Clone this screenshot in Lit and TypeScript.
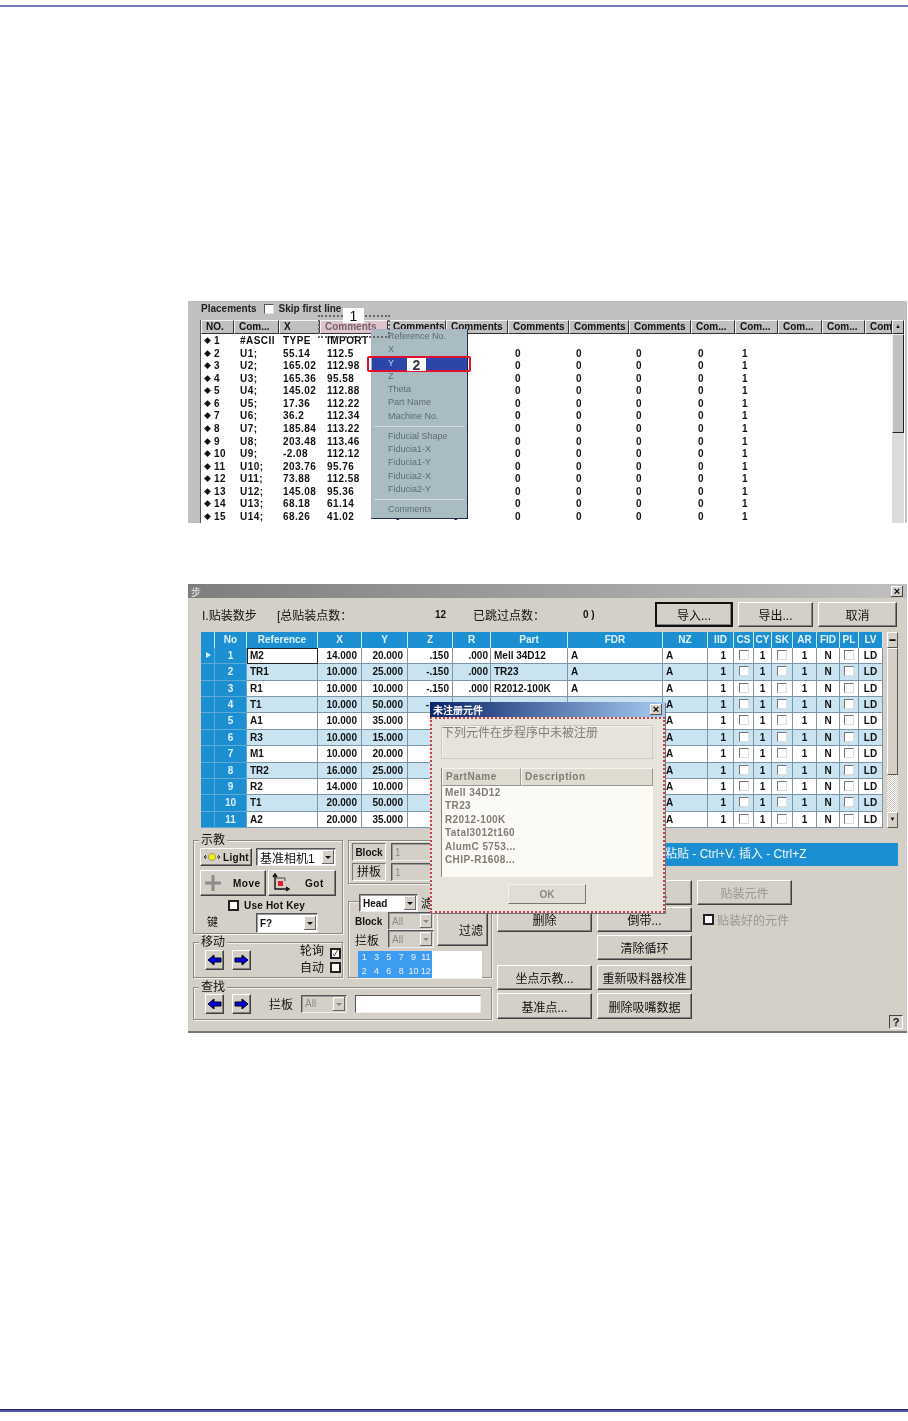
import { LitElement, html, css, svg } from "lit";
import { customElement } from "lit/decorators.js";

const FONT = css`
  :host {
    font-family: "Liberation Sans", "Noto Sans CJK SC", sans-serif;
  }
`;

const COM_COLS = [33, 45, 41, 68, 58, 62, 61, 60, 62, 44, 43, 44, 43, 27];
const COM_HEAD = ["NO.", "Com...", "X", "Comments", "Comments", "Comments", "Comments", "Comments", "Comments", "Com...", "Com...", "Com...", "Com...", "Com"];

const PLACEMENTS = [
  ["#ASCII", "TYPE", "IMPORT"],
  ["U1;", "55.14", "112.5"],
  ["U2;", "165.02", "112.98"],
  ["U3;", "165.36", "95.58"],
  ["U4;", "145.02", "112.88"],
  ["U5;", "17.36", "112.22"],
  ["U6;", "36.2", "112.34"],
  ["U7;", "185.84", "113.22"],
  ["U8;", "203.48", "113.46"],
  ["U9;", "-2.08", "112.12"],
  ["U10;", "203.76", "95.76"],
  ["U11;", "73.88", "112.58"],
  ["U12;", "145.08", "95.36"],
  ["U13;", "68.18", "61.14"],
  ["U14;", "68.26", "41.02"],
];

const MENU = [
  "Reference No.", "X", "Y", "Z", "Theta", "Part Name", "Machine No.", "-",
  "Fiducial Shape", "Fiducia1-X", "Fiducia1-Y", "Fiducia2-X", "Fiducia2-Y", "-", "Comments",
];

@customElement("placements-panel")
class PlacementsPanel extends LitElement {
  render() {
    const tpl = COM_COLS.map((w) => w + "px").join(" ");
    const last = PLACEMENTS.length - 1;
    return html`
      <div class="top">
        <span class="lbl">Placements</span>
        <span class="check"></span>
        <span class="lbl">Skip first line</span>
      </div>
      <div class="table-wrap">
        <div class="table">
          <div class="head" style="grid-template-columns:${tpl}">
            ${COM_HEAD.map((h, i) => html`<div class=${i === 3 ? "hc pink" : "hc"}>${h}</div>`)}
          </div>
          ${PLACEMENTS.map(
            (r, i) => html`
              <div class="row" style="grid-template-columns:${tpl}">
                <div class="no"><span class="dia">◆</span>${i + 1}</div>
                <div class="ref">${r[0]}</div>
                <div class="xc">${r[1]}</div>
                <div class="yc">${r[2]}</div>
                <!-- the first two columns sit under the menu, only the last row peeks out -->
                <div class="z">${i === last ? "0" : ""}</div>
                <div class="z">${i === last ? "0" : ""}</div>
                ${[0, 1, 2, 3].map((c) => html`<div class="z">${i === 0 ? "" : "0"}</div>`)}
                <div class="z">${i === 0 ? "" : "1"}</div>
              </div>
            `
          )}
        </div>
        <div class="scroll">
          <div class="sbtn">▲</div>
          <div class="thumb"></div>
        </div>
      </div>

      <div class="menu">
        ${MENU.map((m) =>
          m === "-"
            ? html`<div class="sep"></div>`
            : html`<div class=${m === "Y" ? "item sel" : "item"}>${m}</div>`
        )}
      </div>
      <div class="dotted"></div>
      <div class="mark m1">1</div>
      <div class="redbox"></div>
      <div class="mark m2">2</div>
    `;
  }

  static styles = [
    FONT,
    css`
      :host {
        display: block;
        position: relative;
        width: 719px;
        height: 222px;
        background: #c0c0c0;
        overflow: hidden;
        color: #111;
        font-size: 10px;
        filter: blur(0.35px);
      }
      .top {
        height: 19px;
        padding: 0 0 4px 13px;
        box-sizing: border-box;
        display: flex;
        align-items: center;
        gap: 5px;
      }
      .lbl {
        font-weight: bold;
        color: #222;
      }
      .check {
        width: 8px;
        height: 8px;
        margin-left: 2px;
        background: #fff;
        border: 1px solid #555;
        border-right-color: #ddd;
        border-bottom-color: #ddd;
      }
      .table-wrap {
        display: flex;
        margin-left: 12px;
        width: 704px;
        height: 203px;
        background: #fff;
        border-left: 1px solid #555;
      }
      .table {
        width: 691px;
        flex: none;
      }
      .head {
        display: grid;
        height: 14px;
      }
      .hc {
        background: #c0c0c0;
        border: 1px solid;
        border-color: #f4f4f4 #333 #333 #f4f4f4;
        padding-left: 4px;
        font-weight: bold;
        line-height: 12px;
        overflow: hidden;
        white-space: nowrap;
        box-sizing: border-box;
      }
      .pink {
        background: #dcc6cc;
        color: #7c6068;
      }
      .row {
        display: grid;
        height: 12.57px;
        line-height: 13px;
        font-weight: bold;
        letter-spacing: 0.45px;
        white-space: nowrap;
      }
      .no {
        padding-left: 3px;
      }
      .ref {
        padding-left: 6px;
      }
      .xc {
        padding-left: 4px;
      }
      .yc {
        padding-left: 7px;
      }
      .z {
        padding-left: 7px;
      }
      .dia {
        display: inline-block;
        width: 10px;
        font-size: 7px;
        vertical-align: 1px;
      }
      .scroll {
        width: 12px;
        flex: none;
        background: #dcdcdc;
      }
      .sbtn,
      .thumb {
        background: #c0c0c0;
        border: 1px solid;
        border-color: #f4f4f4 #222 #222 #f4f4f4;
        box-sizing: border-box;
      }
      .sbtn {
        height: 14px;
        font-size: 6px;
        line-height: 10px;
        text-align: center;
      }
      .thumb {
        height: 99px;
      }
      .menu {
        position: absolute;
        left: 183px;
        top: 28px;
        width: 97px;
        height: 190px;
        box-sizing: border-box;
        background: #a9bcc1;
        border: 1px solid #b0a8d0;
        border-right: 1px solid #1e2c55;
        border-bottom: 1px solid #1e2c55;
        color: #5c6c72;
        font-size: 9px;
      }
      .item {
        height: 13.3px;
        line-height: 13.3px;
        padding-left: 16px;
      }
      .sel {
        background: #2a46a8;
        color: #c8d0e8;
      }
      .sep {
        height: 1px;
        margin: 2.5px 2px 3.2px;
        background: #d0dcde;
      }
      .dotted {
        position: absolute;
        left: 130px;
        top: 14px;
        width: 68px;
        height: 19px;
        border: 2px dotted #666;
      }
      .redbox {
        position: absolute;
        left: 179px;
        top: 55px;
        width: 100px;
        height: 12px;
        border: 2px solid #e01030;
        border-radius: 2px;
      }
      .mark {
        position: absolute;
        background: #fff;
        font-size: 14px;
        text-align: center;
        color: #111;
      }
      .m1 {
        left: 155px;
        top: 7px;
        width: 21px;
        height: 15px;
        line-height: 16px;
      }
      .m2 {
        left: 219px;
        top: 57px;
        width: 19px;
        height: 13px;
        line-height: 14px;
        font-weight: bold;
        color: #334;
      }
    `,
  ];
}

const STEP_COLS = [14, 32, 71, 44, 46, 45, 38, 77, 95, 45, 26, 20, 18, 21, 24, 23, 19, 24];
const STEP_HEAD = ["", "No", "Reference", "X", "Y", "Z", "R", "Part", "FDR", "NZ", "IID", "CS", "CY", "SK", "AR", "FID", "PL", "LV"];
const STEP_ROWS = [
  ["M2", "14.000", "20.000", ".150", ".000", "Mell 34D12"],
  ["TR1", "10.000", "25.000", "-.150", ".000", "TR23"],
  ["R1", "10.000", "10.000", "-.150", ".000", "R2012-100K"],
  ["T1", "10.000", "50.000"],
  ["A1", "10.000", "35.000"],
  ["R3", "10.000", "15.000"],
  ["M1", "10.000", "20.000"],
  ["TR2", "16.000", "25.000"],
  ["R2", "14.000", "10.000"],
  ["T1", "20.000", "50.000"],
  ["A2", "20.000", "35.000"],
];
const MISSING = ["Mell 34D12", "TR23", "R2012-100K", "Tatal3012t160", "AlumC 5753...", "CHIP-R1608..."];

const arrow = (dir: "l" | "r") => html`
  <button class="btn arrow">
    <svg width="15" height="12" viewBox="0 0 15 12">
      ${svg`<path transform=${dir === "r" ? "matrix(-1 0 0 1 15 0)" : ""} d="M1 6 7 1V4H14V8H7V11Z" fill="#0000e0" stroke="#000" stroke-width="1"/>`}
    </svg>
  </button>
`;

const combo = (text: string, cls = "") => html`
  <div class="combo ${cls}">
    <span class="val">${text}</span><span class="drop"></span>
  </div>
`;

@customElement("step-window")
class StepWindow extends LitElement {
  renderGrid() {
    const tpl = STEP_COLS.map((w) => w + "px").join(" ");
    return html`
      <div class="grid">
        <div class="grow ghead" style="grid-template-columns:${tpl}">
          ${STEP_HEAD.map((h) => html`<div class="gh">${h}</div>`)}
        </div>
        ${STEP_ROWS.map((r, i) => {
          // rows from the fourth on run under the message box
          const covered = i >= 3;
          return html`
            <div class="grow ${i % 2 ? "alt" : ""}" style="grid-template-columns:${tpl}">
              <div class="gc ind">${i === 0 ? html`<span class="play"></span>` : ""}</div>
              <div class="gc ind ctr">${i + 1}</div>
              <div class="gc left ${i === 0 ? "focus" : ""}">${r[0]}</div>
              <div class="gc right">${r[1]}</div>
              <div class="gc right">${r[2]}</div>
              ${covered
                ? html`<div class="gc right peek">${i === 3 ? "-" : ""}</div>`
                : html`<div class="gc right tight">${r[3]}</div>`}
              <div class="gc right tighter">${r[4] ?? ""}</div>
              <div class="gc left">${r[5] ?? ""}</div>
              <div class="gc left">${covered ? "" : "A"}</div>
              <div class="gc left">A</div>
              <div class="gc right r2">1</div>
              <div class="gc ctr"><span class="cb"></span></div>
              <div class="gc ctr">1</div>
              <div class="gc ctr"><span class="cb"></span></div>
              <div class="gc ctr">1</div>
              <div class="gc ctr">N</div>
              <div class="gc ctr"><span class="cb"></span></div>
              <div class="gc ctr">LD</div>
            </div>
          `;
        })}
      </div>
      <div class="vscroll">
        <div class="sb">▬</div>
        <div class="sthumb"></div>
        <div class="strack"></div>
        <div class="sb">▼</div>
      </div>
    `;
  }

  renderTeach() {
    return html`
      <div class="group teach">
        <span class="legend">示教</span>
        <div class="teach-row">
          <button class="btn light">
            <svg width="18" height="10" viewBox="0 0 18 10">
              <path d="M1 5h3M14 5h3M3 3 1 5l2 2M15 3l2 2-2 2" fill="none" stroke="#333" stroke-width="1"/>
              <circle cx="9" cy="5" r="3.6" fill="#f4ea10" stroke="#777" stroke-width="0.6"/>
            </svg>
            Light
          </button>
          ${combo("基准相机1", "cam")}
        </div>
        <div class="teach-row two">
          <button class="btn move">
            <svg width="20" height="20" viewBox="0 0 20 20">
              <path d="M8.5 2h3v6.500h6.500v3h-6.500v6.500h-3v-6.500H2v-3h6.500Z" fill="#8c8c8c"/>
            </svg>
            <span>Move</span>
          </button>
          <button class="btn move got">
            <svg width="20" height="20" viewBox="0 0 20 20">
              <path d="M4 2V16H18M2 4 4 1 6 4M15 14l3 2-3 2" fill="none" stroke="#111" stroke-width="1.4"/>
              <path d="M4 5H14V8" fill="none" stroke="#444" stroke-width="1"/>
              <rect x="7" y="8" width="5" height="5" fill="#e02030"/>
            </svg>
            <span>Got</span>
          </button>
        </div>
        <label class="hot"><span class="cb dark"></span>Use Hot Key</label>
        <div class="key">
          <span class="keylbl">键</span>
          ${combo("F?", "f")}
        </div>
      </div>
    `;
  }

  renderMoves() {
    return html`
      <div class="group moves">
        <span class="legend">移动</span>
        ${arrow("l")} ${arrow("r")}
        <div class="auto">
          <div><span class="cjk">轮询</span><span class="cb dark on">✓</span></div>
          <div><span class="cjk">自动</span><span class="cb dark"></span></div>
        </div>
      </div>
    `;
  }

  renderFilter() {
    return html`
      <div class="mid">
        <div class="group blockbox">
          <div class="br"><span class="tag">Block</span>${combo("1", "dis")}</div>
          <div class="br"><span class="tag cjk">拼板</span>${combo("1", "dis")}</div>
        </div>
        <div class="group filter">
          <div class="head-combo">${combo("Head", "bold")}<span class="cjk">滤</span></div>
          <div class="filter-top">
            <div class="labels">
              <div class="fr"><span>Block</span>${combo("All", "dis")}</div>
              <div class="fr"><span class="cjk">拦板</span>${combo("All", "dis")}</div>
            </div>
            <button class="btn filterbtn">过滤</button>
          </div>
          <div class="blocks">
            <div class="nums">
              ${[1, 3, 5, 7, 9, 11, 2, 4, 6, 8, 10, 12].map((n) => html`<span>${n}</span>`)}
            </div>
          </div>
        </div>
      </div>
    `;
  }

  renderRight() {
    return html`
      <div class="right-col">
        <div class="bar"><span class="bartext">粘贴 - Ctrl+V. 插入 - Ctrl+Z</span></div>
        <div class="actions">
          <button class="btn a"></button>
          <button class="btn a">移动到...</button>
          <button class="btn a off">贴装元件</button>

          <button class="btn a">删除</button>
          <button class="btn a">倒带...</button>
          <label class="mounted"><span class="cb dark"></span>贴装好的元件</label>

          <span></span>
          <button class="btn a">清除循环</button>
          <span></span>

          <button class="btn a">坐点示教...</button>
          <button class="btn a">重新吸料器校准</button>
          <span></span>

          <button class="btn a last">基准点...</button>
          <button class="btn a last">删除吸嘴数据</button>
          <span></span>
        </div>
      </div>
    `;
  }

  render() {
    return html`
      <div class="title"><span class="cjk">步</span><span class="x">×</span></div>
      <div class="summary">
        <span>I.贴装数步</span>
        <span>[总贴装点数：</span>
        <span class="num">12</span>
        <span>已跳过点数：</span>
        <span class="num">0 )</span>
        <button class="btn top default">导入...</button>
        <button class="btn top">导出...</button>
        <button class="btn top">取消</button>
      </div>
      <div class="grid-wrap">${this.renderGrid()}</div>
      <div class="lower">
        <div class="lower-left">
          <div class="lower-top">
            <div class="col-left">${this.renderTeach()} ${this.renderMoves()}</div>
            ${this.renderFilter()}
          </div>
          <div class="group find">
            <span class="legend">查找</span>
            ${arrow("l")} ${arrow("r")}
            <span class="cjk findlbl">拦板</span>
            ${combo("All", "dis small")}
            <div class="findinput"></div>
          </div>
        </div>
        ${this.renderRight()}
      </div>
      <button class="btn help">?</button>

      <div class="dialog">
        <div class="dtitle"><span>未注册元件</span><span class="dx">×</span></div>
        <div class="dbody">
          <div class="msg">下列元件在步程序中未被注册</div>
          <div class="lv">
            <div class="lvhead"><span class="lvh">PartName</span><span class="lvh wide">Description</span></div>
            <div class="lvbody">${MISSING.map((m) => html`<div>${m}</div>`)}</div>
          </div>
          <button class="btn ok">OK</button>
        </div>
      </div>
    `;
  }

  static styles = [
    FONT,
    css`
      :host {
        display: block;
        position: relative;
        width: 719px;
        height: 449px;
        background: #d4d0c8;
        color: #111;
        font-size: 10px;
        box-sizing: border-box;
        border-bottom: 2px solid #777;
        filter: blur(0.4px);
      }
      * {
        box-sizing: border-box;
      }
      .cjk {
        font-size: 12px;
      }
      .title {
        height: 14px;
        background: linear-gradient(90deg, #7e7e7e, #c0c0c0);
        color: #eee;
        padding: 0 3px;
        display: flex;
        justify-content: space-between;
        align-items: center;
      }
      .title .cjk {
        font-size: 10px;
      }
      .x {
        width: 12px;
        height: 11px;
        margin-right: 1px;
        background: #d4d0c8;
        color: #000;
        font-weight: bold;
        font-size: 11px;
        line-height: 10px;
        text-align: center;
        box-shadow: inset -1px -1px #444, inset 1px 1px #fff;
      }
      .btn {
        font: inherit;
        color: inherit;
        padding: 0;
        background: #d4d0c8;
        border: 1px solid;
        border-color: #fff #404040 #404040 #fff;
        box-shadow: inset -1px -1px #808080;
      }
      .summary {
        height: 34px;
        padding: 4px 0 0 14px;
        display: grid;
        grid-template-columns: 75px 158px 38px 110px 72px 78px 80px 84px;
        grid-template-rows: 25px;
        align-items: center;
        font-size: 12px;
      }
      .num {
        font-size: 10px;
        font-weight: bold;
      }
      .top {
        height: 25px;
        font-size: 12px;
      }
      .top:not(.default) {
        margin-left: 5px;
      }
      .default {
        border: 2px solid #111;
      }
      .grid-wrap {
        display: flex;
        gap: 4px;
        height: 196px;
        padding-left: 13px;
        overflow: hidden;
      }
      .grid {
        width: 682px;
        flex: none;
      }
      .grow {
        display: grid;
        height: 16.36px;
        background: #fff;
        font-weight: bold;
        line-height: 15px;
      }
      .grow.alt {
        background: #c9e3f1;
      }
      .ghead {
        height: 16px;
        background: #1b8fd2;
      }
      .gh {
        color: #dff0fa;
        text-align: center;
        border-right: 1px solid #cfe6f3;
        overflow: hidden;
        white-space: nowrap;
      }
      .gc {
        border-right: 1px solid #7e97a6;
        border-bottom: 1px solid #7e97a6;
        overflow: hidden;
        white-space: nowrap;
      }
      .ind {
        background: #1b8fd2;
        color: #dff0fa;
        border-color: #5fa9d4;
      }
      .left {
        padding-left: 3px;
      }
      .right {
        text-align: right;
        padding-right: 4px;
      }
      .tight {
        padding-right: 3px;
      }
      .tighter {
        padding-right: 2px;
      }
      .peek {
        padding-right: 23px;
      }
      .r2 {
        padding-right: 7px;
      }
      .ctr {
        text-align: center;
      }
      .focus {
        outline: 1.5px solid #222;
        outline-offset: -1px;
      }
      .play {
        display: block;
        margin: 4px 0 0 5px;
        border-left: 5px solid #dff0fa;
        border-top: 3.5px solid transparent;
        border-bottom: 3.5px solid transparent;
        width: 0;
      }
      .cb {
        display: inline-block;
        width: 10px;
        height: 10px;
        background: #fff;
        border: 1px solid;
        border-color: #777 #ddd #ddd #777;
        vertical-align: -1px;
      }
      .cb.dark {
        width: 11px;
        height: 11px;
        border: 2px solid #222;
        font-size: 8px;
        line-height: 7px;
        text-align: center;
      }
      .vscroll {
        width: 11px;
        flex: none;
        display: flex;
        flex-direction: column;
        background: #d4d0c8;
      }
      .sb {
        height: 16px;
        background: #d4d0c8;
        border: 1px solid;
        border-color: #fff #555 #555 #fff;
        font-size: 6px;
        text-align: center;
        line-height: 13px;
      }
      .sthumb {
        height: 127px;
        background: #d4d0c8;
        border: 1px solid;
        border-color: #fff #555 #555 #fff;
      }
      .strack {
        flex: 1;
        background: repeating-conic-gradient(#fff 0 25%, #c8c4bc 0 50%) 0 0 / 2px 2px;
      }
      .lower {
        display: flex;
        gap: 5px;
        height: 203px;
        padding: 12px 0 0 5px;
      }
      .lower-left {
        width: 299px;
        flex: none;
      }
      .lower-top {
        display: flex;
        gap: 5px;
      }
      .col-left {
        width: 150px;
        display: flex;
        flex-direction: column;
        gap: 8px;
      }
      .group {
        position: relative;
        border: 1px solid #8c8a84;
        box-shadow: 1px 1px #f4f2ec, inset 1px 1px #f4f2ec;
      }
      .legend {
        position: absolute;
        left: 5px;
        top: -8px;
        background: #d4d0c8;
        padding: 0 2px;
        font-size: 12px;
        line-height: 14px;
      }
      .combo {
        display: flex;
        align-items: center;
        background: #fff;
        border: 1px solid;
        border-color: #555 #eee #eee #555;
        box-shadow: inset 1px 1px #999;
        height: 18px;
        padding-left: 3px;
        font-weight: bold;
      }
      .combo .val {
        flex: 1;
        overflow: hidden;
        white-space: nowrap;
      }
      .drop {
        position: relative;
        width: 12px;
        height: 14px;
        margin-right: 1px;
        background: #d4d0c8;
        box-shadow: inset -1px -1px #666, inset 1px 1px #fff;
      }
      .drop::after {
        content: "";
        position: absolute;
        left: 3px;
        top: 6px;
        border-top: 3px solid #111;
        border-left: 3px solid transparent;
        border-right: 3px solid transparent;
      }
      .combo.dis {
        background: #d4d0c8;
        color: #8a8a8a;
        font-weight: normal;
      }
      .combo.dis .drop::after {
        border-top-color: #888;
      }
      .teach {
        height: 94px;
        padding: 7px 6px 0 6px;
      }
      .teach-row {
        display: grid;
        grid-template-columns: 52px 80px;
        gap: 4px;
      }
      .teach-row.two {
        grid-template-columns: 66px 68px;
        gap: 2px;
        margin-top: 4px;
      }
      .light {
        height: 18px;
        display: flex;
        align-items: center;
        gap: 2px;
        padding-left: 2px;
        font-weight: bold;
        letter-spacing: 0.3px;
      }
      .cam {
        font-size: 12px;
        font-weight: normal;
      }
      .move {
        height: 26px;
        display: flex;
        align-items: center;
        padding-left: 2px;
        font-weight: bold;
      }
      .move span {
        margin-left: 10px;
        letter-spacing: 0.5px;
      }
      .got span {
        margin-left: 14px;
      }
      .hot {
        display: flex;
        align-items: center;
        gap: 5px;
        height: 16px;
        margin-top: 1px;
        padding-left: 28px;
        font-weight: bold;
        letter-spacing: 0.2px;
      }
      .key {
        display: flex;
        gap: 38px;
        padding-left: 7px;
      }
      .keylbl {
        font-size: 11px;
        line-height: 18px;
      }
      .combo.f {
        width: 62px;
        height: 20px;
      }
      .moves {
        height: 36px;
        display: flex;
        align-items: center;
        gap: 8px;
        padding-left: 11px;
      }
      .arrow {
        width: 19px;
        height: 20px;
        display: flex;
        align-items: center;
        justify-content: center;
      }
      .auto {
        margin-left: auto;
        margin-right: 1px;
        text-align: right;
        line-height: 17px;
      }
      .auto .cb {
        margin-left: 6px;
      }
      .mid {
        width: 144px;
        display: flex;
        flex-direction: column;
      }
      .blockbox {
        height: 44px;
        padding: 2px 3px;
        overflow: hidden;
      }
      .br {
        display: flex;
        gap: 5px;
        margin-bottom: 2px;
      }
      .tag {
        width: 34px;
        height: 18px;
        text-align: center;
        line-height: 17px;
        font-weight: bold;
        background: #d4d0c8;
        border: 1px solid;
        border-color: #777 #fff #fff #777;
      }
      .tag.cjk {
        font-weight: normal;
      }
      .br .combo {
        flex: 1;
      }
      .filter {
        margin-top: 17px;
        height: 77px;
        padding: 0 9px;
      }
      .head-combo {
        position: absolute;
        left: 10px;
        top: -8px;
        display: flex;
        gap: 3px;
        background: #d4d0c8;
      }
      .head-combo .combo {
        width: 59px;
      }
      .filter-top {
        display: flex;
        margin-top: 10px;
        height: 39px;
      }
      .labels {
        width: 79px;
        flex: none;
        margin-left: -3px;
      }
      .fr {
        display: flex;
        justify-content: space-between;
        align-items: center;
        height: 18px;
        font-weight: bold;
      }
      .fr .cjk {
        font-weight: normal;
      }
      .fr .combo {
        width: 46px;
      }
      .filterbtn {
        flex: none;
        width: 51px;
        height: 33px;
        margin: 1px 0 0 3px;
        font-size: 12px;
        text-align: right;
        padding-right: 4px;
      }
      .blocks {
        width: 124px;
        height: 27px;
        background: #fff;
      }
      .nums {
        width: 74px;
        height: 27px;
        background: #3c9cf0;
        color: #eef;
        display: grid;
        grid-template-columns: repeat(6, 1fr);
        text-align: center;
        line-height: 13px;
        font-size: 9px;
      }
      .find {
        margin-top: 9px;
        height: 33px;
        display: flex;
        align-items: center;
        gap: 8px;
        padding-left: 11px;
      }
      .findlbl {
        margin-left: 10px;
      }
      .combo.small {
        width: 46px;
      }
      .findinput {
        width: 126px;
        height: 18px;
        background: #fff;
        border: 1px solid;
        border-color: #555 #eee #eee #555;
      }
      .right-col {
        width: 401px;
        flex: none;
        padding-top: 3px;
      }
      .bar {
        height: 23px;
        background: #1b8fd2;
        color: #eef6fb;
        font-size: 12px;
        line-height: 23px;
        padding-left: 168px;
        white-space: nowrap;
      }
      .actions {
        display: grid;
        grid-template-columns: 95px 95px 95px;
        column-gap: 5px;
        grid-template-rows: 25px 27px 28px 30px 29px;
        margin-top: 14px;
        align-items: end;
        font-size: 12px;
      }
      .a {
        height: 25px;
      }
      .last {
        height: 26px;
      }
      .off {
        color: #9a9890;
      }
      .mounted {
        display: flex;
        align-items: center;
        gap: 3px;
        height: 25px;
        padding-left: 6px;
        color: #9a9890;
        white-space: nowrap;
      }
      .help {
        position: absolute;
        left: 701px;
        top: 431px;
        width: 14px;
        height: 14px;
        border-color: #444 #fff #fff #444;
        box-shadow: none;
        font-weight: bold;
        font-size: 11px;
        line-height: 11px;
      }
      .dialog {
        position: absolute;
        left: 242px;
        top: 118px;
        width: 235px;
        height: 211px;
        background: #e6e3da;
        box-shadow: 1px 1px #777;
      }
      .dtitle {
        height: 15px;
        background: linear-gradient(90deg, #0a246a, #a6caf0);
        color: #fff;
        font-size: 10px;
        font-weight: bold;
        padding: 0 3px;
        display: flex;
        justify-content: space-between;
        align-items: center;
      }
      .dx {
        width: 12px;
        height: 11px;
        background: #d4d0c8;
        color: #000;
        font-size: 11px;
        line-height: 10px;
        text-align: center;
        box-shadow: inset -1px -1px #555, inset 1px 1px #fff;
      }
      .dbody {
        height: 196px;
        border: 2px dotted #c8404c;
        padding: 6px 10px 0 9px;
        color: #7f7d76;
      }
      .msg {
        height: 34px;
        border: 1px solid #cdcac0;
        box-shadow: inset 1px 1px #f4f2ec;
        font-size: 12px;
        line-height: 14px;
      }
      .lv {
        margin-top: 9px;
        height: 109px;
        background: #fbfaf5;
        border-left: 1px solid #888;
      }
      .lvhead {
        display: flex;
        height: 18px;
        font-weight: bold;
        letter-spacing: 0.5px;
      }
      .lvh {
        width: 79px;
        background: #dedbd1;
        border: 1px solid;
        border-color: #f6f4ee #999 #999 #f6f4ee;
        padding-left: 3px;
        line-height: 16px;
      }
      .lvh.wide {
        flex: 1;
      }
      .lvbody {
        padding-left: 3px;
        font-weight: bold;
        line-height: 13.4px;
        letter-spacing: 0.4px;
      }
      .ok {
        display: block;
        width: 78px;
        height: 20px;
        margin: 7px auto 0;
        background: #e0ddd4;
        color: #8a8880;
        font-weight: bold;
        border-color: #f4f2ec #777 #777 #f4f2ec;
        box-shadow: none;
      }
    `,
  ];
}

@customElement("app-root")
class AppRoot extends LitElement {
  render() {
    return html`
      <div class="rule-top"></div>
      <placements-panel class="fig first"></placements-panel>
      <step-window class="fig second"></step-window>
      <div class="rule-bottom"></div>
    `;
  }

  static styles = css`
    :host {
      display: block;
      width: 908px;
      height: 1421px;
      background: #fff;
      overflow: hidden;
      padding-top: 5px;
      box-sizing: border-box;
    }
    .rule-top {
      height: 2px;
      background: #7b7bb8;
    }
    .fig {
      margin-left: 188px;
    }
    .first {
      margin-top: 294px;
    }
    .second {
      margin-top: 61px;
    }
    .rule-bottom {
      height: 3px;
      margin-top: 376px;
      background: linear-gradient(#23235a 33%, #5555b5 33%);
    }
  `;
}

export default AppRoot;
export { PlacementsPanel, StepWindow };
